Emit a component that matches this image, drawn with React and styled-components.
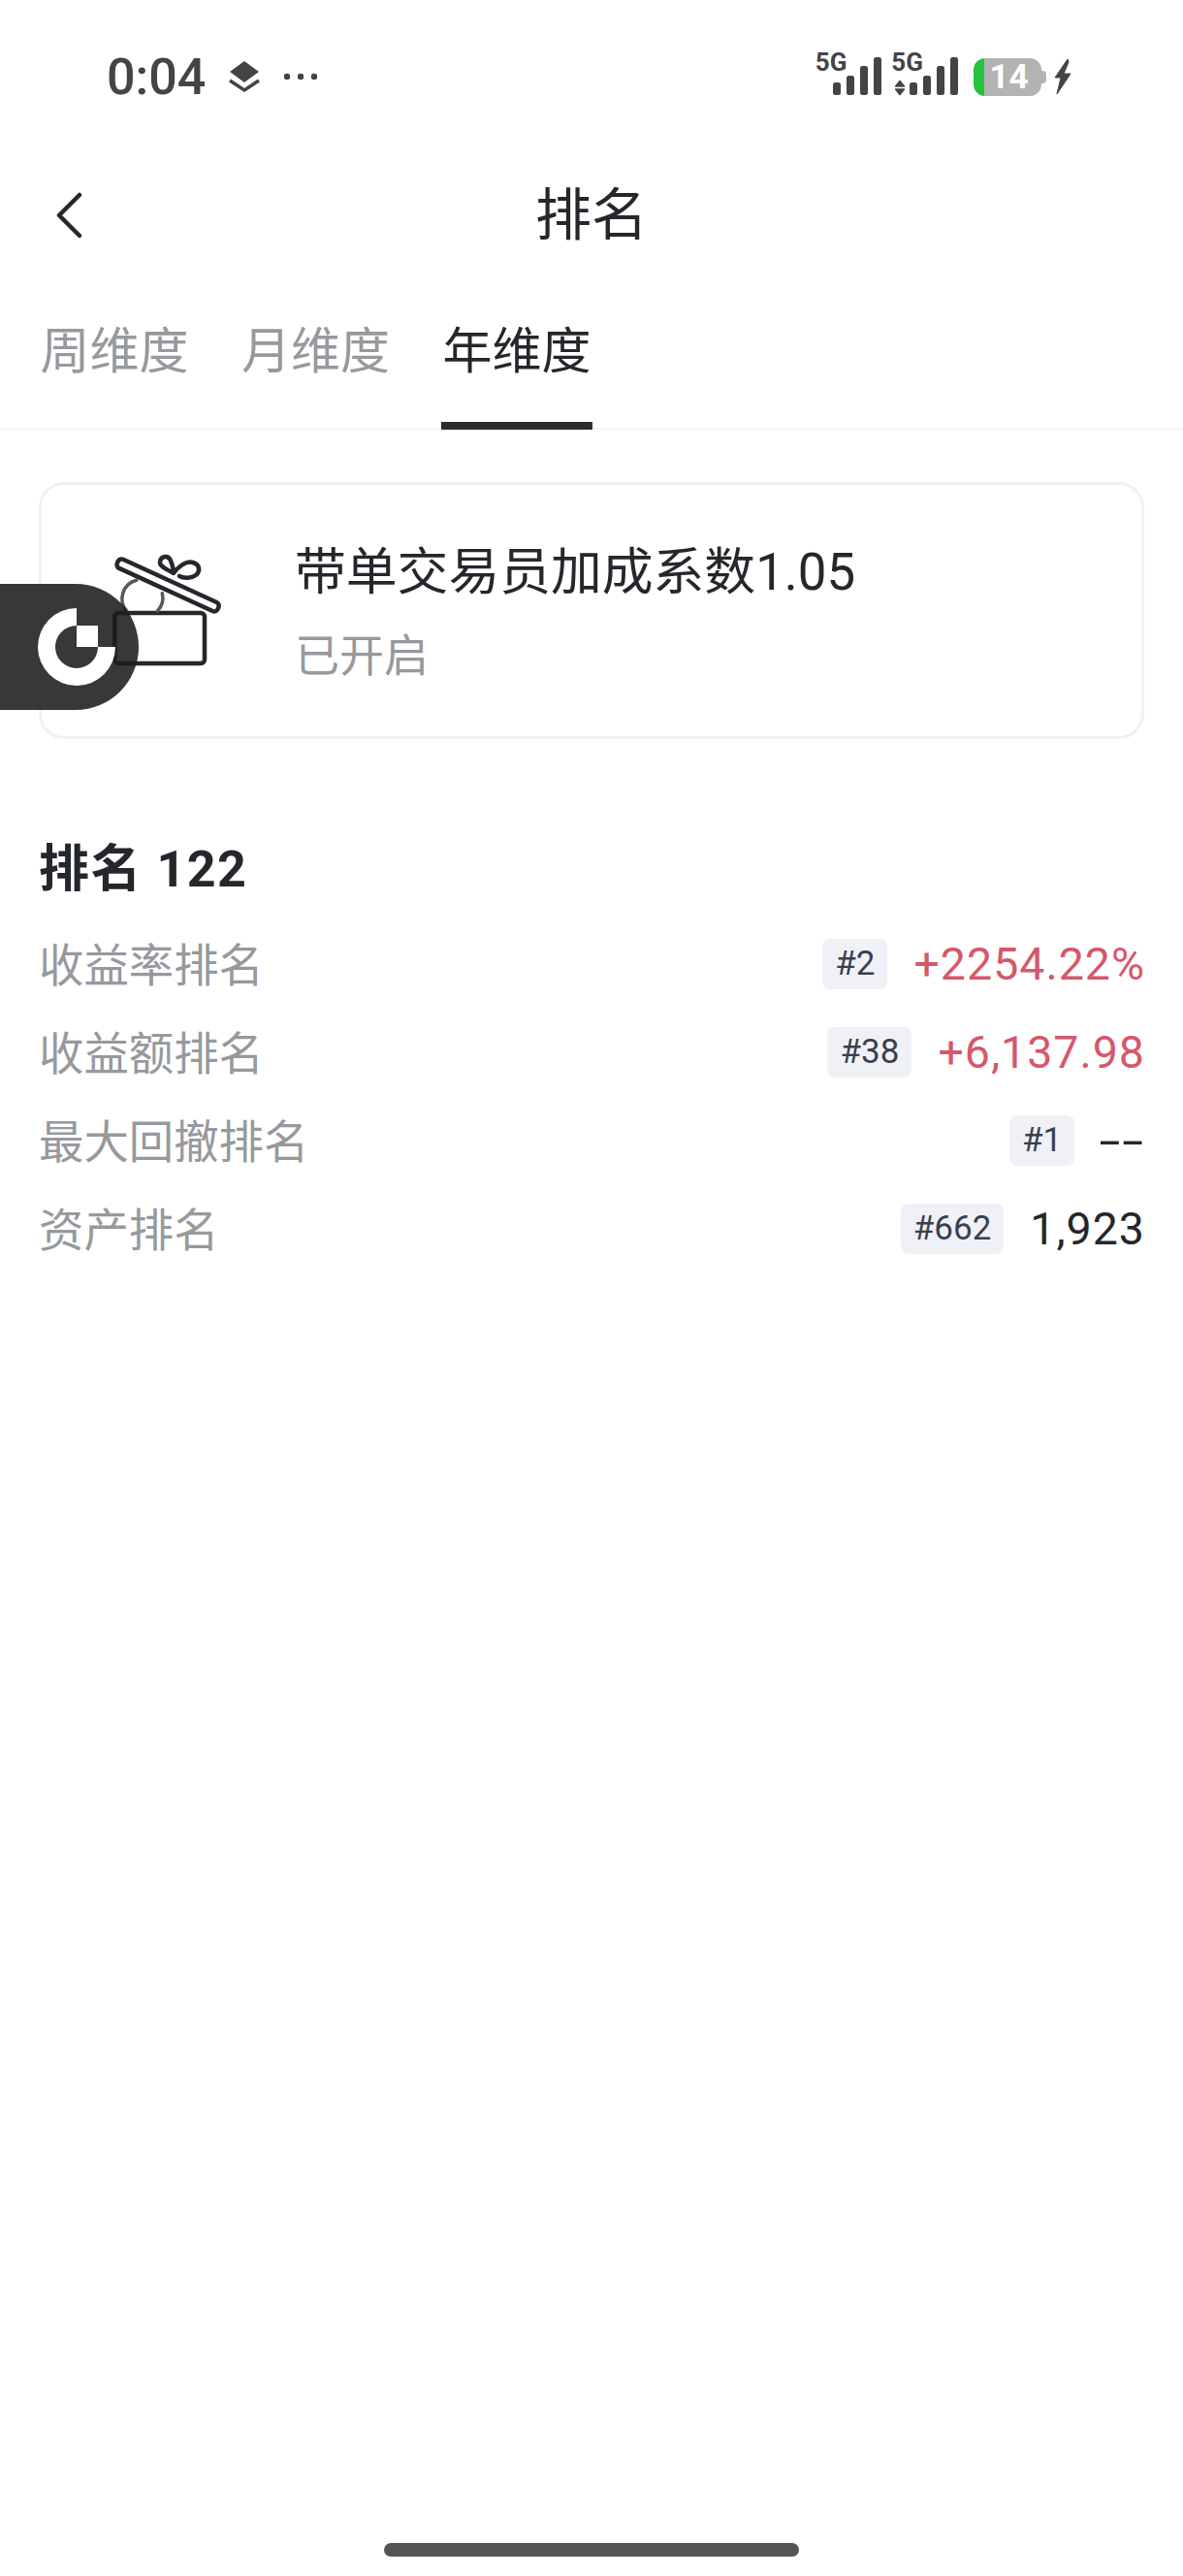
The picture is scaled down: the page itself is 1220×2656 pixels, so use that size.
import React from "react";
import styled, { createGlobalStyle } from "styled-components";

const GlobalStyle = createGlobalStyle`
  html, body {
    margin: 0;
    padding: 0;
    background: #fff;
  }
  body {
    font-family: Roboto, "Noto Sans CJK SC", sans-serif;
    color: #24272b;
  }
`;

const Page = styled.div`
  position: relative;
  width: 1220px;
  height: 2656px;
  overflow: hidden;
  background: #fff;
  display: flex;
  flex-direction: column;
`;

const StatusBar = styled.div`
  height: 158px;
  box-sizing: border-box;
  padding: 0 115px 0 110px;
  display: flex;
  align-items: center;
  justify-content: space-between;
  color: #444;
  flex-shrink: 0;
`;

const StatusLeft = styled.div`
  display: flex;
  align-items: center;
`;

const Clock = styled.span`
  font-size: 52px;
  font-weight: 500;
  line-height: 1;
  margin: 2px 24px 0 0;
`;

const LayersIcon = styled.svg`
  margin-right: 24px;
`;

const StatusRight = styled.div`
  display: flex;
  align-items: center;
  height: 40px;
`;

const Signal = styled.div`
  display: flex;
  align-items: flex-start;
  margin-right: ${(p) => p.$gap}px;
`;

const NetLabel = styled.span`
  font-size: 26px;
  font-weight: 700;
  line-height: 18px;
  margin-top: -4px;
  margin-right: ${(p) => p.$overlap}px;
`;

const Battery = styled.div`
  position: relative;
  width: 70px;
  height: 39px;
  border-radius: 12px;
  background: linear-gradient(to right, #23c23f 11px, #b3b3b3 11px);
  color: #fff;
  font-size: 35px;
  font-weight: 700;
  line-height: 39px;
  text-align: center;
  padding-left: 3px;
  box-sizing: border-box;
  margin-right: 13px;

  &::after {
    content: "";
    position: absolute;
    right: -5px;
    top: 13px;
    width: 5px;
    height: 13px;
    border-radius: 0 4px 4px 0;
    background: #b3b3b3;
  }
`;

const NavBar = styled.div`
  height: 124px;
  flex-shrink: 0;
  position: relative;
  display: flex;
  align-items: center;
  justify-content: center;
`;

const BackButton = styled.div`
  position: absolute;
  left: 56px;
  top: 40px;
  display: flex;
`;

const Title = styled.div`
  font-size: 58px;
  font-weight: 400;
  line-height: 1;
  color: #24272b;
  margin-top: 3px;
`;

const Tabs = styled.div`
  height: 161px;
  box-sizing: border-box;
  flex-shrink: 0;
  padding: 0 40px;
  display: flex;
  align-items: stretch;
  gap: 51.5px;
  border-bottom: 2px solid #f2f3f5;
`;

const Tab = styled.div`
  width: 156px;
  display: flex;
  justify-content: center;
  font-size: 51px;
  line-height: 60px;
  padding-top: 51px;
  box-sizing: border-box;
  margin-bottom: -2px;
  color: ${(p) => (p.$active ? "#24272b" : "#96999d")};
  border-bottom: 8px solid ${(p) => (p.$active ? "#2b2d30" : "transparent")};
`;

const Card = styled.div`
  margin: 54px 40px 0;
  height: 265px;
  box-sizing: border-box;
  border: 3px solid #f0f1f3;
  border-radius: 26px;
  padding-left: 71px;
  display: flex;
  align-items: center;
  gap: 70px;
`;

const GiftIcon = styled.svg`
  width: 120px;
  height: 120px;
  flex-shrink: 0;
`;

const CardText = styled.div`
  display: flex;
  flex-direction: column;
  gap: 29px;
  margin-top: 2px;
`;

const CardTitle = styled.div`
  font-size: 52.8px;
  line-height: 62px;
  color: #24272b;
`;

const CardSub = styled.div`
  font-size: 46px;
  line-height: 52px;
  color: #96999d;
`;

const Section = styled.div`
  margin: 100px 40px 0;
  display: flex;
  flex-direction: column;
`;

const Heading = styled.div`
  font-size: 52px;
  font-weight: 700;
  line-height: 70px;
  color: #24272b;
  letter-spacing: 1.5px;
  margin-bottom: 18px;
`;

const Row = styled.div`
  height: 91px;
  display: flex;
  align-items: center;
  justify-content: space-between;
`;

const RowLabel = styled.div`
  font-size: 46.4px;
  color: #96999d;
  line-height: 1;
  margin-top: 2px;
`;

const RowRight = styled.div`
  display: flex;
  align-items: center;
  gap: 27px;
  margin-top: -3px;
`;

const RankTag = styled.span`
  height: 52px;
  box-sizing: border-box;
  padding: 0 13px;
  background: #eff1f6;
  border-radius: 8px;
  color: #3a3f4c;
  font-size: 35px;
  line-height: 52px;
`;

const RowValue = styled.span`
  font-size: 46.5px;
  line-height: 1;
  letter-spacing: 1px;
  margin-right: -1px;
  color: ${(p) => (p.$up ? "#d5586a" : "#24272b")};
`;

// the app's number font has much longer hyphens than Roboto
const EmptyValue = styled(RowValue)`
  display: inline-block;
  margin-left: 18px;
  transform: scaleX(1.7);
  transform-origin: right center;
`;

const FloatBall = styled.div`
  position: absolute;
  left: 0;
  top: 602px;
  width: 143px;
  height: 130px;
  border-radius: 0 65px 65px 0;
  background: rgba(28, 28, 28, 0.88);
  display: flex;
  align-items: center;
  padding-left: 39px;
  box-sizing: border-box;
`;

const HomeBar = styled.div`
  position: absolute;
  left: 396px;
  top: 2622px;
  width: 428px;
  height: 14px;
  border-radius: 7px;
  background: #555;
`;

const SignalBars = ({ arrows }) => (
  <svg width={arrows ? 65 : 50} height="40" viewBox={arrows ? "0 0 65 40" : "0 0 50 40"} fill="#444">
    {arrows && (
      <g stroke="#444" strokeWidth="1.5" strokeLinejoin="round">
        <path d="M5 24.5 L9.5 30 H0.5 Z" />
        <path d="M0.5 33 H9.5 L5 38.5 Z" />
      </g>
    )}
    <g transform={arrows ? "translate(15 0)" : undefined}>
      <rect x="0" y="26" width="8" height="13" rx="2.5" />
      <rect x="14" y="19" width="8" height="20" rx="2.5" />
      <rect x="28" y="9" width="8" height="30" rx="2.5" />
      <rect x="42" y="0" width="8" height="39" rx="2.5" />
    </g>
  </svg>
);

const App = () => {
  const rows = [
    { label: "收益率排名", rank: "#2", value: "+2254.22%", up: true },
    { label: "收益额排名", rank: "#38", value: "+6,137.98", up: true },
    { label: "最大回撤排名", rank: "#1", value: "--", empty: true },
    { label: "资产排名", rank: "#662", value: "1,923" },
  ];

  return (
    <Page>
      <GlobalStyle />
      <StatusBar>
        <StatusLeft>
          <Clock>0:04</Clock>
          <LayersIcon width="32" height="34" viewBox="0 0 32 34" fill="#444">
            <path d="M16 1 L31 12 L16 23 L1 12 Z" />
            <path d="M1 21 L16 31 L31 21" fill="none" stroke="#444" strokeWidth="3.4" />
          </LayersIcon>
          <svg width="36" height="8" viewBox="0 0 36 8" fill="#444">
            <circle cx="4" cy="4" r="3.2" />
            <circle cx="18" cy="4" r="3.2" />
            <circle cx="32" cy="4" r="3.2" />
          </svg>
        </StatusLeft>
        <StatusRight>
          <Signal $gap={10}>
            <NetLabel $overlap={-14}>5G</NetLabel>
            <SignalBars />
          </Signal>
          <Signal $gap={16}>
            <NetLabel $overlap={-29}>5G</NetLabel>
            <SignalBars arrows />
          </Signal>
          <Battery>14</Battery>
          <svg width="18" height="38" viewBox="0 0 18 38" fill="#444" stroke="#444" strokeWidth="1" strokeLinejoin="round">
            <path d="M14 1 L1 20 H7 L3 37 L17 16 H10 L15 4 Z" />
          </svg>
        </StatusRight>
      </StatusBar>

      <NavBar>
        <BackButton>
          <svg width="32" height="48" viewBox="0 0 32 48" fill="none" stroke="#24272b" strokeWidth="4.5" strokeLinecap="round" strokeLinejoin="round">
            <path d="M26 3 L5 24 L26 45" />
          </svg>
        </BackButton>
        <Title>排名</Title>
      </NavBar>

      <Tabs>
        <Tab>周维度</Tab>
        <Tab>月维度</Tab>
        <Tab $active>年维度</Tab>
      </Tabs>

      <Card>
        <GiftIcon viewBox="0 0 120 120" fill="none" stroke="#24272b" strokeWidth="4.5" strokeLinejoin="round" strokeLinecap="round">
          <rect x="4.3" y="62" width="92.7" height="52" rx="4" />
          <path d="M16.7 60 A19.5 19.5 0 0 1 26.7 28.3 M53.3 41.7 A19.5 19.5 0 0 1 48.3 60" stroke="#55585c" strokeWidth="3.5" />
          <g transform="translate(7.3 9.7) rotate(24.6)">
            <rect x="0" y="-5" width="114" height="10" rx="4" />
          </g>
          <path d="M65 21 C58 17 50 14 51 9 C52 3 60 2 62 8 C64 13 65 16 65 21 C70 14 78 8 85 10 C92 12 93 19 88 23 C84 26 76 27 71 24" />
        </GiftIcon>
        <CardText>
          <CardTitle>带单交易员加成系数1.05</CardTitle>
          <CardSub>已开启</CardSub>
        </CardText>
      </Card>

      <Section>
        <Heading>排名 122</Heading>
        {rows.map((r) => (
          <Row key={r.label}>
            <RowLabel>{r.label}</RowLabel>
            <RowRight>
              <RankTag>{r.rank}</RankTag>
              {r.empty ? <EmptyValue>{r.value}</EmptyValue> : <RowValue $up={r.up}>{r.value}</RowValue>}
            </RowRight>
          </Row>
        ))}
      </Section>

      <FloatBall>
        <svg width="80" height="80" viewBox="0 0 80 80" fill="#fff">
          <path d="M40 0 V18 A22 22 0 1 0 62 40 H80 A40 40 0 1 1 40 0 Z" />
          <rect x="40" y="18" width="22" height="22" />
        </svg>
      </FloatBall>

      <HomeBar />
    </Page>
  );
};

export default App;
